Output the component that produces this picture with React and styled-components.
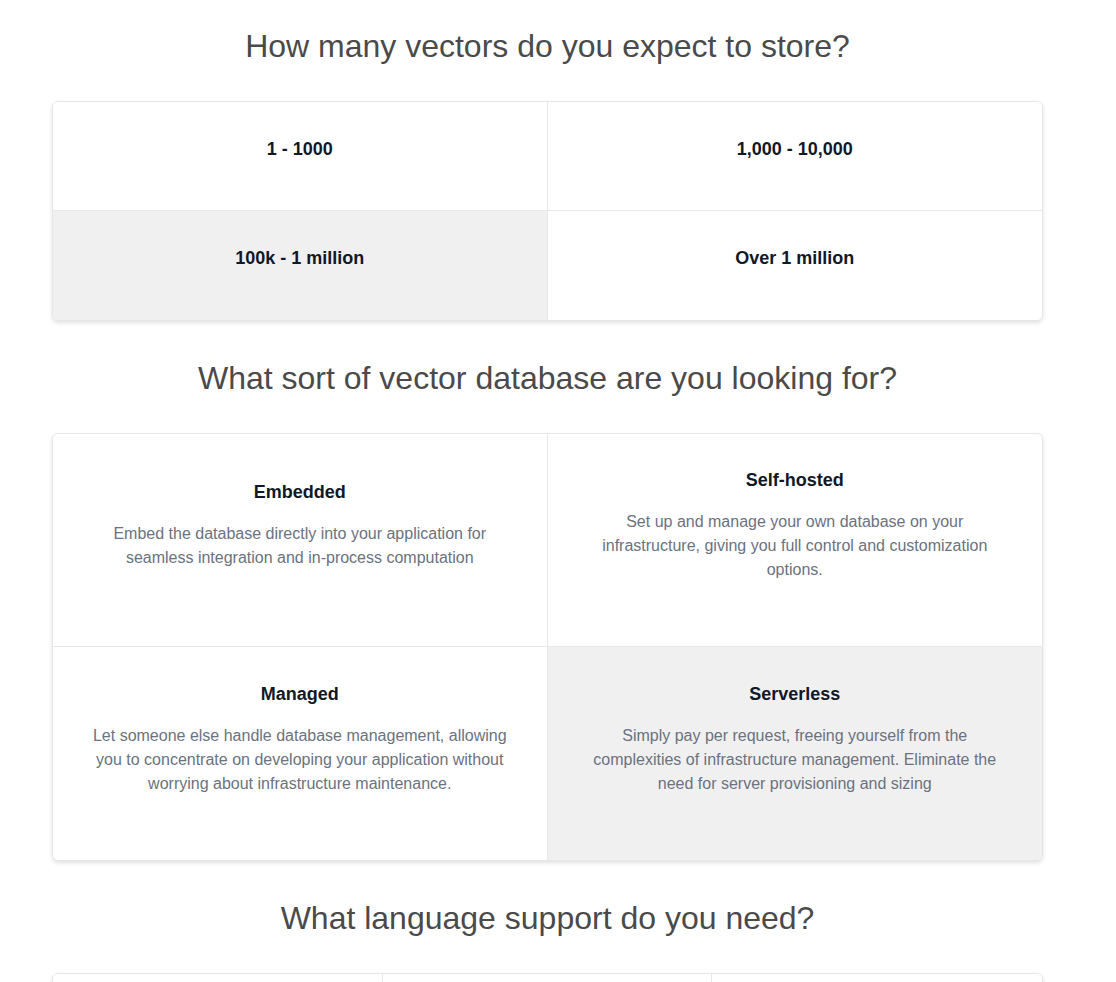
import React, { useState } from "react";
import styled, { createGlobalStyle } from "styled-components";

const GlobalStyle = createGlobalStyle`
  html, body {
    margin: 0;
    padding: 0;
    background: #ffffff;
    font-family: "Liberation Sans", Arial, Helvetica, sans-serif;
  }
`;

const sizeOptions = [
  { title: "1 - 1000" },
  { title: "1,000 - 10,000" },
  { title: "100k - 1 million" },
  { title: "Over 1 million" },
];

const typeOptions = [
  {
    title: "Embedded",
    text: "Embed the database directly into your application for seamless integration and in-process computation",
  },
  {
    title: "Self-hosted",
    text: "Set up and manage your own database on your infrastructure, giving you full control and customization options.",
  },
  {
    title: "Managed",
    text: "Let someone else handle database management, allowing you to concentrate on developing your application without worrying about infrastructure maintenance.",
  },
  {
    title: "Serverless",
    text: "Simply pay per request, freeing yourself from the complexities of infrastructure management. Eliminate the need for server provisioning and sizing",
  },
];

const languageOptions = [
  { title: "Python" },
  { title: "JavaScript / TypeScript" },
  { title: "Rust" },
];

const Question = ({ title, options, columns, rowHeight, shift, selected, onSelect }) => {
  return (
    <Section>
      <Heading>{title}</Heading>
      <Card $columns={columns}>
        {options.map((option, index) => {
          const lastCol = (index + 1) % columns === 0;
          const lastRow = index >= options.length - columns;
          return (
            <Option
              key={index}
              type="button"
              $height={rowHeight}
              $shift={shift}
              $selected={selected === index}
              $lastCol={lastCol}
              $lastRow={lastRow}
              onClick={() => onSelect(index)}
            >
              <OptionTitle $withText={!!option.text}>{option.title}</OptionTitle>
              {option.text && <OptionText>{option.text}</OptionText>}
            </Option>
          );
        })}
      </Card>
    </Section>
  );
};

const App = () => {
  const [size, setSize] = useState(2);
  const [type, setType] = useState(3);
  const [lang, setLang] = useState(null);

  return (
    <>
      <GlobalStyle />
      <Page>
        <Question
          title="How many vectors do you expect to store?"
          options={sizeOptions}
          columns={2}
          rowHeight={109}
          shift={15}
          selected={size}
          onSelect={setSize}
        />
        <Question
          title="What sort of vector database are you looking for?"
          options={typeOptions}
          columns={2}
          rowHeight={213}
          shift={30}
          selected={type}
          onSelect={setType}
        />
        <Question
          title="What language support do you need?"
          options={languageOptions}
          columns={3}
          rowHeight={160}
          shift={0}
          selected={lang}
          onSelect={setLang}
        />
      </Page>
    </>
  );
};

export default App;

const Page = styled.main`
  padding: 26px 73px 40px 52px;
`;

const Section = styled.section`
  margin-bottom: 37px;
`;

const Heading = styled.h2`
  margin: 0 0 35px;
  text-align: center;
  font-size: 32px;
  line-height: 40px;
  font-weight: 400;
  color: #4a4a4a;
`;

const Card = styled.div`
  display: grid;
  grid-template-columns: repeat(${(p) => p.$columns}, 1fr);
  border: 1px solid #e5e7eb;
  border-radius: 6px;
  overflow: hidden;
  background: #ffffff;
  box-shadow: 0 2px 4px rgba(0, 0, 0, 0.12);
`;

const Option = styled.button`
  display: flex;
  flex-direction: column;
  align-items: center;
  justify-content: center;
  height: ${(p) => p.$height}px;
  padding: 0 34px ${(p) => p.$shift}px;
  box-sizing: border-box;
  border: none;
  border-right: ${(p) => (p.$lastCol ? "none" : "1px solid #e5e7eb")};
  border-bottom: ${(p) => (p.$lastRow ? "none" : "1px solid #e5e7eb")};
  background: ${(p) => (p.$selected ? "#f0f0f0" : "#ffffff")};
  font-family: inherit;
  text-align: center;
  cursor: pointer;
`;

const OptionTitle = styled.div`
  font-size: 18px;
  line-height: 24px;
  font-weight: 700;
  color: #111827;
  margin-bottom: ${(p) => (p.$withText ? "18px" : "0")};
`;

const OptionText = styled.p`
  margin: 0;
  max-width: 425px;
  font-size: 16px;
  line-height: 24px;
  color: #6b7280;
`;
